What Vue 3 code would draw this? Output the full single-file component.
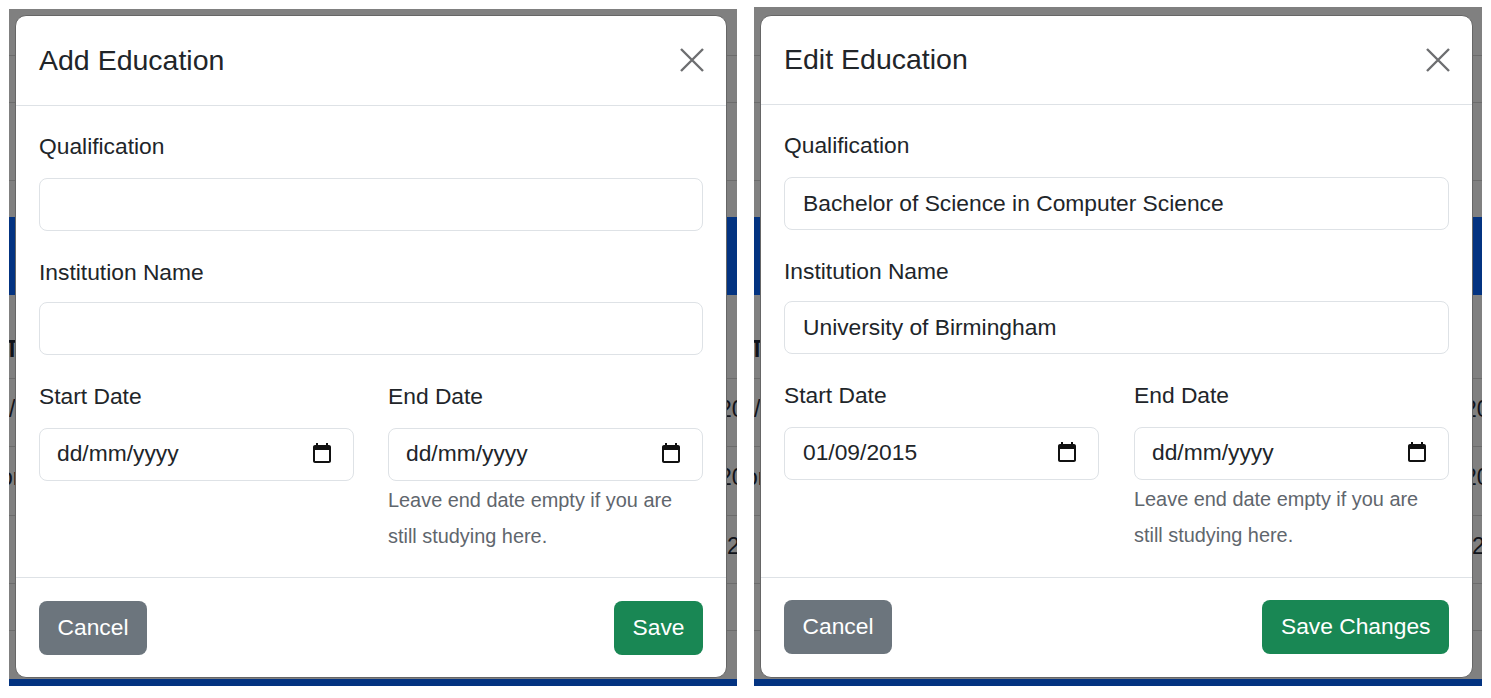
<template>
  <div class="page">
    <section
      v-for="item in dialogs"
      :key="item.key"
      class="panel"
      :class="item.key"
    >
      <!-- page behind the dialog -->
      <div class="backdrop">
        <div class="strip" style="height: 47px"></div>
        <div class="strip" style="height: 47px"></div>
        <div class="strip" style="height: 78px"></div>
        <div class="strip last" style="height: 36px"></div>
        <div class="banner"></div>
        <div class="row head">
          <span class="cut-t">T</span>
        </div>
        <div class="row first">
          <span class="cut-slash">/</span><span class="cut-end">20</span>
        </div>
        <div class="row second">
          <span class="cut-or">or</span><span class="cut-end">20</span>
        </div>
        <div class="row third">
          <span></span><span class="cut-end one">2</span>
        </div>
        <div class="strip" style="height: 47px"></div>
        <div class="strip last" style="height: 48px"></div>
        <div class="banner grow"></div>
      </div>

      <div class="modal">
        <header class="modal-header">
          <h5>{{ item.title }}</h5>
          <svg class="close" viewBox="0 0 24 24" width="24" height="24">
            <path d="M1 1 23 23M23 1 1 23" fill="none" stroke="#6d6e70" stroke-width="2.4" />
          </svg>
        </header>

        <div class="modal-body">
          <label class="label">Qualification</label>
          <input class="control" type="text" :value="item.qualification" />

          <label class="label second">Institution Name</label>
          <input class="control" type="text" :value="item.institution" />

          <div class="dates">
            <div class="col">
              <label class="label">Start Date</label>
              <div class="control date">
                <span :class="{ placeholder: !item.hasStart }">{{ item.start }}</span>
                <svg viewBox="0 0 24 24" width="24" height="24">
                  <path d="M19 3h-1V1h-2v2H8V1H6v2H5c-1.1 0-2 .9-2 2v14c0 1.1.9 2 2 2h14c1.1 0 2-.9 2-2V5c0-1.1-.9-2-2-2zm0 16H5V8h14v11z" />
                </svg>
              </div>
            </div>
            <div class="col">
              <label class="label">End Date</label>
              <div class="control date">
                <span class="placeholder">dd/mm/yyyy</span>
                <svg viewBox="0 0 24 24" width="24" height="24">
                  <path d="M19 3h-1V1h-2v2H8V1H6v2H5c-1.1 0-2 .9-2 2v14c0 1.1.9 2 2 2h14c1.1 0 2-.9 2-2V5c0-1.1-.9-2-2-2zm0 16H5V8h14v11z" />
                </svg>
              </div>
              <p class="help">Leave end date empty if you are still studying here.</p>
            </div>
          </div>
        </div>

        <footer class="modal-footer">
          <button class="btn cancel">Cancel</button>
          <button class="btn save">{{ item.action }}</button>
        </footer>
      </div>
    </section>
  </div>
</template>

<script setup>
const dialogs = [
  {
    key: 'add',
    title: 'Add Education',
    qualification: '',
    institution: '',
    start: 'dd/mm/yyyy',
    hasStart: false,
    action: 'Save',
  },
  {
    key: 'edit',
    title: 'Edit Education',
    qualification: 'Bachelor of Science in Computer Science',
    institution: 'University of Birmingham',
    start: '01/09/2015',
    hasStart: true,
    action: 'Save Changes',
  },
]
</script>

<style>
html,
body {
  background: #fff;
}
</style>

<style scoped>
.page {
  display: flex;
  align-items: flex-start;
  gap: 17px;
  height: 698px;
  padding: 9px 0 0 9px;
  box-sizing: border-box;
  font-family: "Liberation Sans", Arial, sans-serif;
  color: #212529;
  overflow: hidden;
}

.panel {
  position: relative;
  flex: none;
  width: 728px;
  height: 677px;
  overflow: hidden;
  background: #808080;
}

.panel.edit {
  height: 679px;
  margin-top: -2px;
}

.backdrop {
  display: flex;
  flex-direction: column;
  height: 100%;
}

.edit .backdrop {
  padding-top: 2px;
  box-sizing: border-box;
}

.strip {
  flex: none;
  box-sizing: border-box;
  border-bottom: 1px solid #6c6c6c;
}

.strip.last {
  border-bottom: none;
}

.banner {
  flex: none;
  height: 78px;
  background: #033381;
}

.banner.grow {
  flex: 1;
  height: auto;
}

.row {
  flex: none;
  display: flex;
  justify-content: space-between;
  align-items: flex-end;
  box-sizing: border-box;
  border-bottom: 1px solid #6c6c6c;
  font-size: 23px;
  line-height: 24px;
  color: #10131a;
}

.row.head {
  height: 84px;
  padding-bottom: 17px;
}

.row.first {
  height: 68px;
  padding-bottom: 25px;
}

.row.second {
  height: 69px;
  padding-bottom: 26px;
}

.row.third {
  height: 68px;
  padding-bottom: 25px;
}

.cut-t {
  margin-left: -4px;
  font-weight: 700;
}

.cut-or {
  margin-left: -9px;
}

.cut-end {
  width: 18px;
  overflow: hidden;
}

.cut-end.one {
  width: 10px;
}

/* dialog lies over the page */
.modal {
  position: absolute;
  top: 6px;
  left: 6px;
  width: 712px;
  height: 663px;
  display: flex;
  flex-direction: column;
  box-sizing: border-box;
  background: #fff;
  border: 1px solid #666;
  border-radius: 11px;
}

.edit .modal {
  top: 8px;
  width: 713px;
}

.modal-header {
  flex: none;
  display: flex;
  align-items: center;
  justify-content: space-between;
  box-sizing: border-box;
  height: 90px;
  padding: 0 22px 2px 23px;
  border-bottom: 1px solid #dee2e6;
}

.edit .modal-header {
  height: 89px;
  padding-bottom: 0;
}

.modal-header h5 {
  margin: 0;
  font-size: 28.5px;
  font-weight: 400;
  line-height: 34px;
}

.edit .modal-header h5 {
  margin-bottom: 2px;
}

.close {
  display: block;
}

.modal-body {
  flex: 1;
  display: flex;
  flex-direction: column;
  padding: 24px 23px 0;
}

.label {
  display: block;
  height: 40px;
  font-size: 22.8px;
  line-height: 32px;
  margin-bottom: 8px;
}

.label.second {
  margin-top: 25px;
  margin-bottom: 6px;
}

.control {
  display: block;
  width: 100%;
  height: 53px;
  box-sizing: border-box;
  padding: 0 18px 1px;
  border: 1px solid #dee2e6;
  border-radius: 8px;
  background: #fff;
  color: #212529;
  font-family: inherit;
  font-size: 22.8px;
  outline: none;
}

.dates {
  display: flex;
  gap: 34px;
  margin-top: 25px;
}

.edit .dates {
  gap: 35px;
}

.col {
  flex: 1;
  min-width: 0;
}

.date {
  display: flex;
  align-items: center;
  justify-content: space-between;
  padding-right: 19px;
}

.date span {
  margin-bottom: 1px;
}

.date .placeholder {
  margin-left: -1px;
}

.date svg {
  display: block;
  fill: #111;
}

.help {
  margin: 1px 0 0;
  font-size: 19.9px;
  line-height: 36px;
  color: #5f666d;
}

.modal-footer {
  flex: none;
  display: flex;
  justify-content: space-between;
  box-sizing: border-box;
  height: 100px;
  padding: 23px 23px 0;
  border-top: 1px solid #dee2e6;
}

.edit .modal-footer {
  padding-top: 22px;
}

.btn {
  height: 54px;
  padding: 0 18.5px 2px;
  border: none;
  border-radius: 8px;
  color: #fff;
  font-family: inherit;
  font-size: 22.8px;
}

.cancel {
  background: #6c757d;
}

.save {
  background: #198754;
}
</style>
